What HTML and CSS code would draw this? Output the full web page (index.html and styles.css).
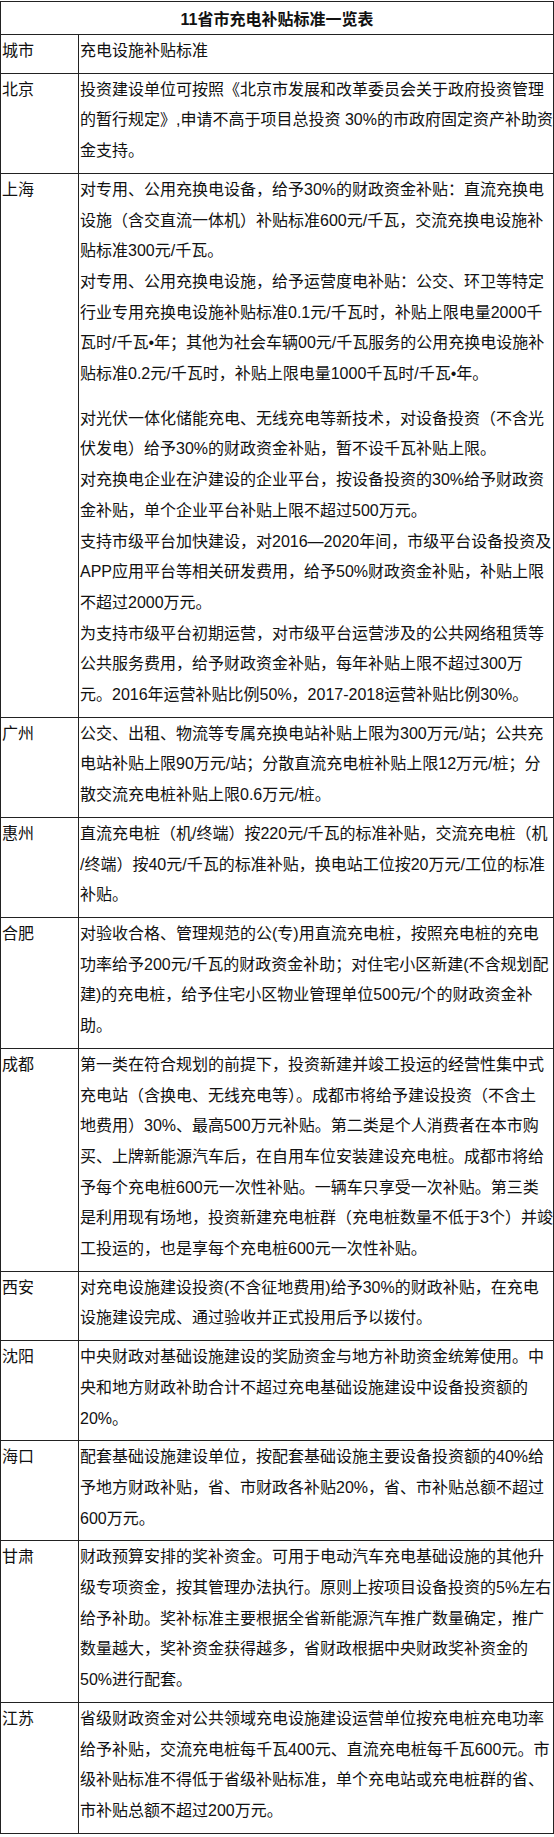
FILE: index.html
```html
<!DOCTYPE html>
<html lang="zh-CN">
<head>
<meta charset="utf-8">
<title>11省市充电补贴标准一览表</title>
<link rel="stylesheet" href="styles.css">
</head>
<body>
<table class="sheet">
  <colgroup>
    <col class="col-city">
    <col class="col-desc">
  </colgroup>
  <tr><th class="title" colspan="2">11省市充电补贴标准一览表</th></tr>
  <tr><td class="city">城市</td><td class="desc">充电设施补贴标准</td></tr>
  <tr><td class="city">北京</td><td class="desc">投资建设单位可按照《北京市发展和改革委员会关于政府投资管理<br>的暂行规定》,申请不高于项目总投资 30%的市政府固定资产补助资<br>金支持。</td></tr>
  <tr><td class="city">上海</td><td class="desc">
    <div class="para">对专用、公用充换电设备，给予30%的财政资金补贴：直流充换电<br>设施（含交直流一体机）补贴标准600元/千瓦，交流充换电设施补<br>贴标准300元/千瓦。</div>
    <div class="para para-spaced">对专用、公用充换电设施，给予运营度电补贴：公交、环卫等特定<br>行业专用充换电设施补贴标准0.1元/千瓦时，补贴上限电量2000千<br>瓦时/千瓦•年；其他为社会车辆00元/千瓦服务的公用充换电设施补<br>贴标准0.2元/千瓦时，补贴上限电量1000千瓦时/千瓦•年。</div>
    <div class="para">对光伏一体化储能充电、无线充电等新技术，对设备投资（不含光<br>伏发电）给予30%的财政资金补贴，暂不设千瓦补贴上限。</div>
    <div class="para">对充换电企业在沪建设的企业平台，按设备投资的30%给予财政资<br>金补贴，单个企业平台补贴上限不超过500万元。</div>
    <div class="para">支持市级平台加快建设，对2016—2020年间，市级平台设备投资及<br>APP应用平台等相关研发费用，给予50%财政资金补贴，补贴上限<br>不超过2000万元。</div>
    <div class="para">为支持市级平台初期运营，对市级平台运营涉及的公共网络租赁等<br>公共服务费用，给予财政资金补贴，每年补贴上限不超过300万<br>元。2016年运营补贴比例50%，2017-2018运营补贴比例30%。</div>
  </td></tr>
  <tr><td class="city">广州</td><td class="desc">公交、出租、物流等专属充换电站补贴上限为300万元/站；公共充<br>电站补贴上限90万元/站；分散直流充电桩补贴上限12万元/桩；分<br>散交流充电桩补贴上限0.6万元/桩。</td></tr>
  <tr><td class="city">惠州</td><td class="desc">直流充电桩（机/终端）按220元/千瓦的标准补贴，交流充电桩（机<br>/终端）按40元/千瓦的标准补贴，换电站工位按20万元/工位的标准<br>补贴。</td></tr>
  <tr><td class="city">合肥</td><td class="desc">对验收合格、管理规范的公(专)用直流充电桩，按照充电桩的充电<br>功率给予200元/千瓦的财政资金补助；对住宅小区新建(不含规划配<br>建)的充电桩，给予住宅小区物业管理单位500元/个的财政资金补<br>助。</td></tr>
  <tr><td class="city">成都</td><td class="desc">第一类在符合规划的前提下，投资新建并竣工投运的经营性集中式<br>充电站（含换电、无线充电等）。成都市将给予建设投资（不含土<br>地费用）30%、最高500万元补贴。第二类是个人消费者在本市购<br>买、上牌新能源汽车后，在自用车位安装建设充电桩。成都市将给<br>予每个充电桩600元一次性补贴。一辆车只享受一次补贴。第三类<br>是利用现有场地，投资新建充电桩群（充电桩数量不低于3个）并竣<br>工投运的，也是享每个充电桩600元一次性补贴。</td></tr>
  <tr><td class="city">西安</td><td class="desc">对充电设施建设投资(不含征地费用)给予30%的财政补贴，在充电<br>设施建设完成、通过验收并正式投用后予以拨付。</td></tr>
  <tr><td class="city">沈阳</td><td class="desc">中央财政对基础设施建设的奖励资金与地方补助资金统筹使用。中<br>央和地方财政补助合计不超过充电基础设施建设中设备投资额的<br>20%。</td></tr>
  <tr><td class="city">海口</td><td class="desc">配套基础设施建设单位，按配套基础设施主要设备投资额的40%给<br>予地方财政补贴，省、市财政各补贴20%，省、市补贴总额不超过<br>600万元。</td></tr>
  <tr><td class="city">甘肃</td><td class="desc">财政预算安排的奖补资金。可用于电动汽车充电基础设施的其他升<br>级专项资金，按其管理办法执行。原则上按项目设备投资的5%左右<br>给予补助。奖补标准主要根据全省新能源汽车推广数量确定，推广<br>数量越大，奖补资金获得越多，省财政根据中央财政奖补资金的<br>50%进行配套。</td></tr>
  <tr><td class="city">江苏</td><td class="desc">省级财政资金对公共领域充电设施建设运营单位按充电桩充电功率<br>给予补贴，交流充电桩每千瓦400元、直流充电桩每千瓦600元。市<br>级补贴标准不得低于省级补贴标准，单个充电站或充电桩群的省、<br>市补贴总额不超过200万元。</td></tr>
</table>
</body>
</html>
```

FILE: styles.css
```css
html, body {
  margin: 0;
  padding: 0;
  background: #ffffff;
}

body {
  font-family: "Liberation Sans", "Noto Sans CJK SC", sans-serif;
  font-size: 16px;
  color: #111111;
}

.sheet {
  width: 554px;
  margin: 1px 0 0 0;
  border-collapse: collapse;
  table-layout: fixed;
}

.col-city {
  width: 78px;
}

.sheet th,
.sheet td {
  border: 1px solid #222222;
  vertical-align: top;
  text-align: left;
  padding: 1px 0 6px 1px;
  line-height: 30.7px;
}

.sheet .title {
  text-align: center;
  font-weight: bold;
  line-height: 28px;
  padding: 4px 0 0 0;
}

.desc {
  white-space: nowrap;
}

.para {
  margin: 0;
}

.para-spaced {
  margin-bottom: 14px;
}
```
